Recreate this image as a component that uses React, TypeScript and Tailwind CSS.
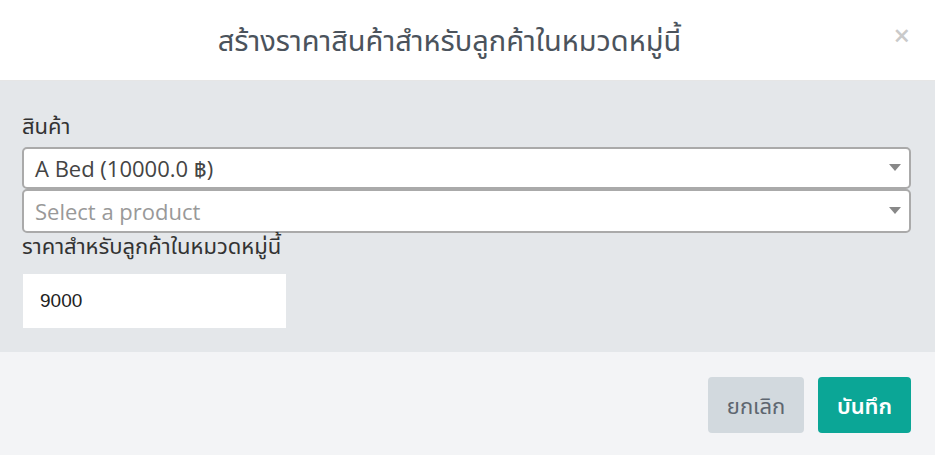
// Modal for creating a per-category product price.
import { useState } from 'react'

const thai = "font-['Open_Sans','Noto_Sans','Noto_Sans_Thai',sans-serif]"

function Caret() {
  return (
    <svg width="12" height="8" viewBox="0 0 12 8" className="shrink-0">
      <path d="M0 0 L12 0 L6 7 Z" fill="#888" />
    </svg>
  )
}

function SelectBox({ value, placeholder, h }: { value?: string; placeholder: string; h: string }) {
  return (
    <div className={`flex ${h} items-center justify-between rounded-[5px] border-2 border-[#aaaaaa] bg-white pl-[11px] pr-[8px]`}>
      <span className={`text-[22px] ${value ? 'text-[#444]' : 'text-[#999]'}`}>{value ?? placeholder}</span>
      <Caret />
    </div>
  )
}

export default function App() {
  const [price, setPrice] = useState('9000')

  return (
    <div className={`flex h-[455px] w-[935px] flex-col bg-white ${thai}`}>
      <div className="relative flex h-[81px] items-center justify-center border-b border-[#e6e6e6] bg-white pr-[36px]">
        <h2 className="text-[29px] text-[#4b535c]">สร้างราคาสินค้าสำหรับลูกค้าในหมวดหมู่นี้</h2>
        <button className="absolute right-[25px] top-[13px] text-[29px] font-semibold text-[#cacaca]" aria-label="close">
          ×
        </button>
      </div>

      <div className="flex h-[271px] flex-col bg-[#e4e7ea] px-[22px] pt-[32px]">
        <label className="mb-[10px] text-[22px] leading-[24px] text-[#333]">สินค้า</label>
        <div className="mr-[2px] flex flex-col">
          <SelectBox value="A Bed (10000.0 ฿)" placeholder="Select a product" h="h-[42px]" />
          <SelectBox placeholder="Select a product" h="h-[44px]" />
        </div>
        <label className="text-[22px] leading-[24px] text-[#333]">ราคาสำหรับลูกค้าในหมวดหมู่นี้</label>
        <input
          value={price}
          onChange={(e) => setPrice(e.target.value)}
          className="mt-[17px] ml-px h-[54px] w-[263px] bg-white px-[17px] font-['Liberation_Sans',sans-serif] text-[19px] text-[#222] outline-none"
        />
      </div>

      <div className="flex flex-1 items-start justify-end gap-[14px] bg-[#f3f4f6] pr-[24px] pt-[25px]">
        <button className="h-[56px] w-[96px] rounded-[4px] bg-[#d2d9de] text-[22px] text-[#5e6670]">ยกเลิก</button>
        <button className="h-[56px] w-[93px] rounded-[4px] bg-[#0ba696] text-[22px] font-semibold text-white">บันทึก</button>
      </div>
    </div>
  )
}
